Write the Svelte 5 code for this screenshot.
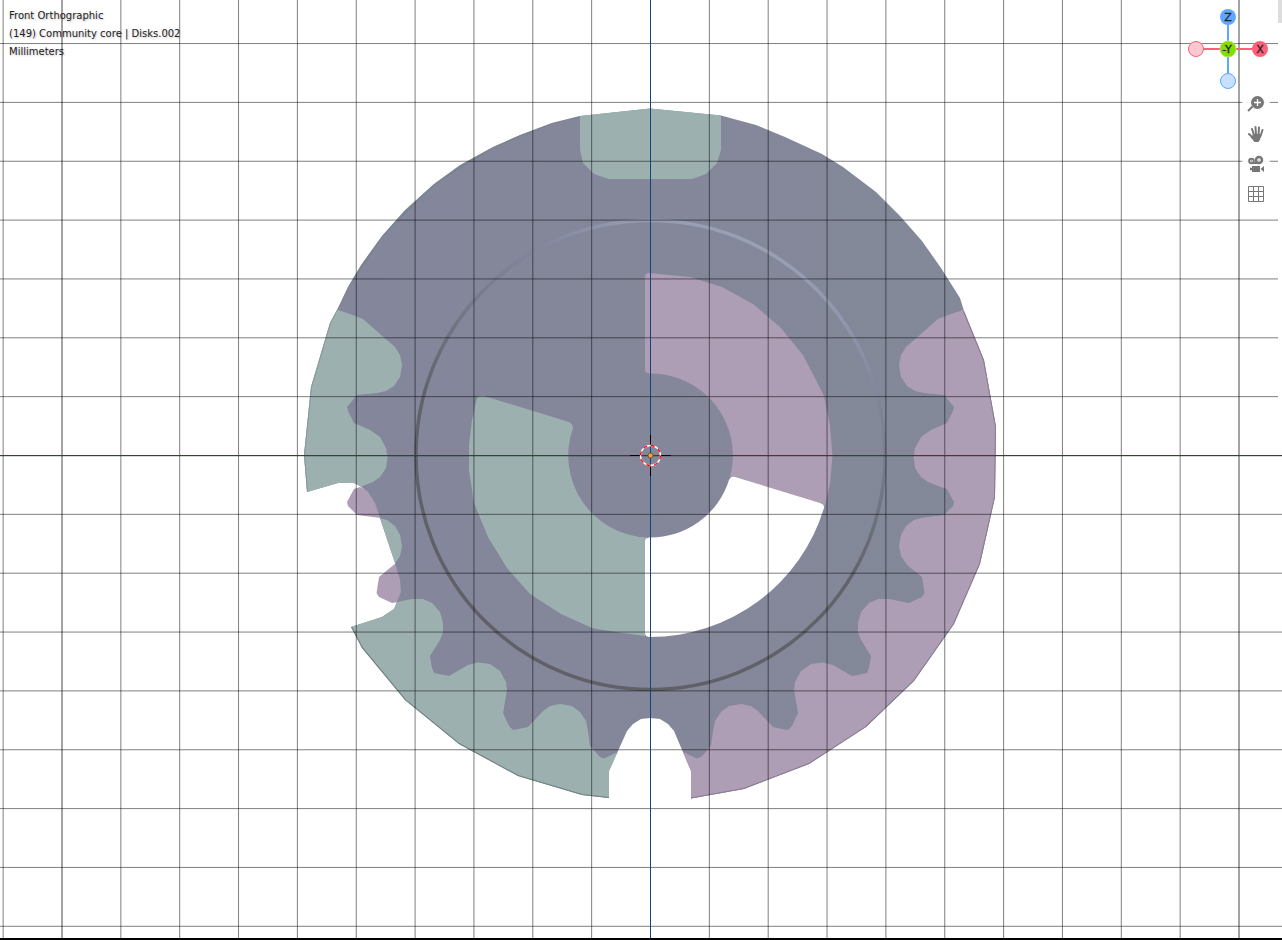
<script>
  const cx = 650.5;
  const cy = 455.5;
  const step = 58.85;
  const columns = Array.from({ length: 22 }, (_, i) => i - 11).map((k) => ({ k, x: cx + k * step }));
  const rows = Array.from({ length: 16 }, (_, i) => i - 7).map((k) => ({ k, y: cy + k * step }));

  // Left flank of the cogged disk, from the upper shoulder to the bottom notch.
  const flank = [
    [338, 310], [350, 314], [363, 319], [380, 334], [395, 347], [400, 355], [402, 365], [400, 377], [394, 386],
    [386, 391], [377, 393], [357, 395], [347, 407], [348, 411], [354, 423], [370, 430], [380, 437], [386, 448],
    [387.5, 457], [386, 468], [380, 477], [373, 482], [360, 487], [354, 489], [347, 502], [348, 506], [357, 515],
    [377, 517.5], [387, 520], [395, 526], [400, 535], [402, 546], [400, 556], [394, 565], [379, 577], [376.5, 593],
    [379, 597], [392, 603], [412, 599], [423, 599], [432, 603], [440, 612], [443, 623], [443, 632], [440, 640],
    [430, 656], [432, 668], [434, 673], [449, 676], [468, 665], [478, 662.5], [490, 664], [500, 671], [506, 682],
    [507, 690], [503, 713], [509, 726], [513, 730], [528, 727], [543, 711], [550, 706], [560, 704], [572, 706],
    [580, 712], [586, 721], [588, 731], [590, 746], [600, 757], [604, 758.5], [618, 752]
  ];
  const str = (pts) => pts.map((p) => p.join(',')).join(' ');
  const mirror = (pts) => pts.map(([x, y]) => [1301 - x, y]);
  const leftRim = [...flank, [640, 820], [280, 820], [280, 290]];
  const leftSide = str(leftRim);
  const rightSide = str(mirror(leftRim));

  const outline =
    '580,116 650,108.5 721,115.5 756,125 785,137 822,154 843,167 876,192 900,216 922,241 941,268 960,298 964,311 984,360 996,427 995,497 980,564 954,624 914,681 866,727 809,764 744,789 691,798.5 691,771 674,731 668,724 660,719 650,718 641,719 633,724 627,731 609,771 609,798 582,795 518,776 459,744 405,700 362,648 351,627 382,617 394,609 401,592 400,580 395,563 380,518 375,503 368,492 360,486 353,482.5 338,483 307,492 304,455 311,387 330,323 338,308 348,287 361,265 382,236 405,210 434,184 460,165 493,147 520,135 552,123';
</script>

<main class="viewport">
  <svg class="scene" viewBox="0 0 1282 940" preserveAspectRatio="xMidYMid slice" aria-label="Disks.002">
    <defs>
      <clipPath id="outline"><polygon points={outline} /></clipPath>
      <linearGradient id="body" x1="0" y1="0" x2="1" y2="0">
        <stop offset="0" stop-color="#84869b" />
        <stop offset="0.5" stop-color="#84879a" />
        <stop offset="1" stop-color="#838999" />
      </linearGradient>
      <linearGradient id="groove" gradientUnits="userSpaceOnUse" x1="570" y1="690" x2="770" y2="220">
        <stop offset="0" stop-color="#606067" />
        <stop offset="0.42" stop-color="#62636b" />
        <stop offset="0.6" stop-color="#747786" />
        <stop offset="0.76" stop-color="#81859a" />
        <stop offset="0.87" stop-color="#9096ac" />
        <stop offset="1" stop-color="#a0a6bc" />
      </linearGradient>
      <filter id="soft"><feGaussianBlur stdDeviation="0.7" /></filter>
    </defs>

    <g fill="#ad9db5">
      <polygon points="366,490 360,487 354,489 347,502 348,506 357,515 381,518 378,500" />
      <polygon points="396,563 379,577 376.5,593 379,597 392,603 399,602 403,590 402,575" />
    </g>
    <polygon points={outline} fill="url(#body)" />
    <g clip-path="url(#outline)">
      <polygon points={leftSide} fill="#9db0b0" />
      <polygon points={rightSide} fill="#ad9db5" />
      <path d="M580 100V150L583 163L594 174L609 179H692L706 174L717 163L721 150V100Z" fill="#9db0b0" />
      <polyline
        points="964,311 984,360 996,427 995,497 980,564 954,624 914,681 866,727 809,764 744,789 691,798.5"
        fill="none" stroke="#75657c" stroke-width="2" filter="url(#soft)" opacity="0.6" />
      <polyline
        points="609,798 582,795 518,776 459,744 405,700 362,648 351,627"
        fill="none" stroke="#5f7070" stroke-width="2" filter="url(#soft)" opacity="0.7" />
      <polyline
        points="307,492 304,455 311,387 330,323 348,287 382,236 434,184 493,147 552,123 580,116"
        fill="none" stroke="#708285" stroke-width="2" filter="url(#soft)" opacity="0.5" />
    </g>
    <circle cx={cx} cy="455" r="234.5" fill="none" stroke="url(#groove)" stroke-width="3.500" filter="url(#soft)" />

    <path
      d="M645 277Q645 273 649 273L690 277L722 287L753 304L780 327L803 355L818 384L824 396L830 425L832.5 456L830 484L825 506L820 504L730 477A82 82 0 0 0 650 373.500Q645 373 645 370Z"
      fill="#ad9db5" />
    <path
      d="M477 398Q479 395 484 396L569 422Q573 424 573 428A82 82 0 0 0 647 537.500L645 540V636L609 631L592 628L561 614L530 594L507 568L488 537L474 503L469 470V445L472 420Z"
      fill="#9db0b0" />
    <path
      d="M645 541Q645 538 649 537.500A82 82 0 0 0 729 480Q731 476 735 477L820 503Q825 505 824 508A182 182 0 0 1 650 637Q645 637 645 633Z"
      fill="#fff" />

    <g stroke="#000">
      {#each columns as c}
        {#if c.k !== 0}
          <line x1={c.x} x2={c.x} y1="0" y2="940" stroke-opacity={c.k % 10 === 0 ? 0.72 : 0.5} />
        {/if}
      {/each}
      {#each rows as r}
        {#if r.k !== 0}
          <line x1="0" x2="1282" y1={r.y} y2={r.y} stroke-opacity="0.5" />
        {/if}
      {/each}
    </g>
    <line x1="0" x2="1282" y1="456.500" y2="456.500" stroke="#000" stroke-opacity="0.15" />
    <line x1="0" x2="1282" y1={cy} y2={cy} stroke="#7d1f2d" />
    <line x1={cx} x2={cx} y1="0" y2="940" stroke="#0f447f" />
    <path d="M630 455.500H641M660 455.500H671M650.500 435V446M650.500 465V476" stroke="#000" />
    <circle cx={cx} cy={cy} r="10" fill="none" stroke="#fff" stroke-width="1.300" />
    <circle cx={cx} cy={cy} r="10" fill="none" stroke="#f00" stroke-width="1.300" stroke-dasharray="3.927" />
    <circle cx={cx} cy={cy} r="2.500" fill="#ffa02b" stroke="#5b4638" stroke-width="0.800" />
  </svg>

  <header class="info">
    <div>Front Orthographic</div>
    <div>(149) Community core | Disks.002</div>
    <div>Millimeters</div>
  </header>

  <div class="edge"><div class="handle"></div></div>

  <aside class="controls">
    <svg class="gizmo" width="80" height="82" viewBox="0 0 80 82" role="img" aria-label="View axes">
      <path d="M40 9V73" stroke="#5ea8ff" stroke-width="2" />
      <path d="M8 41H72" stroke="#ff6079" stroke-width="2" />
      <circle cx="8" cy="41" r="7.500" fill="#ffc8d0" stroke="#ff6079" />
      <circle cx="40" cy="73" r="7.500" fill="#c8e0ff" stroke="#5ea8ff" />
      <circle cx="40" cy="9" r="8" fill="#5ea8ff" />
      <circle cx="72" cy="41" r="8" fill="#ff6079" />
      <circle cx="40" cy="41" r="8" fill="#86dc00" stroke="#b4e666" stroke-width="1" />
      <g class="axis" text-anchor="middle">
        <text x="40" y="13">Z</text>
        <text x="72" y="45">X</text>
        <text x="39" y="45">-Y</text>
      </g>
    </svg>
    <nav class="tools">
      <button aria-label="Zoom">
        <svg width="18" height="18" viewBox="0 0 18 18">
          <path d="M1 16L5.500 11.500" stroke="#777" stroke-width="2" />
          <circle cx="10.500" cy="7.500" r="6.500" fill="#777" />
          <path d="M10.500 4V11M7 7.500H14" stroke="#fff" stroke-width="1.300" />
        </svg>
      </button>
      <button aria-label="Move">
        <svg width="18" height="18" viewBox="0 0 18 18">
          <g stroke="#777" stroke-linecap="round" stroke-width="2" fill="none">
            <path d="M5 4L7 10M8.500 2L9 10M12 2.500L11.500 10M15.500 5L13.500 11M2 9L6 13" />
          </g>
          <path d="M5.500 9H14.500L14 12Q13 15 11.500 17H7.500L3.500 12L5.500 11.500Z" fill="#777" />
        </svg>
      </button>
      <button aria-label="Camera view">
        <svg width="18" height="18" viewBox="0 0 18 18">
          <circle cx="4.500" cy="6" r="2.300" fill="none" stroke="#777" stroke-width="2" />
          <circle cx="12" cy="5" r="3" fill="none" stroke="#777" stroke-width="2.500" />
          <path d="M4.500 9H12V7H5ZM5 11H13V17H5V15L3 15.500V12.500L5 13ZM13.500 14L17 11V17Z" fill="#777" />
          <circle cx="4.500" cy="6" r=".7" fill="#777" /><circle cx="12" cy="5" r=".6" fill="#777" />
        </svg>
      </button>
      <button aria-label="Perspective or orthographic">
        <svg width="18" height="18" viewBox="0 0 18 18">
          <path d="M1.500 1.500H16.500V16.500H1.500ZM6.500 1.500V16.500M11.500 1.500V16.500M1.500 6.500H16.500M1.500 11.500H16.500" fill="none" stroke="#777" />
        </svg>
      </button>
    </nav>
  </aside>
</main>

<style>
  .viewport {
    position: relative;
    height: 100vh;
    box-sizing: border-box;
    overflow: hidden;
    background: #fff;
    border-bottom: 2px solid #000;
    font-family: "DejaVu Sans", sans-serif;
  }
  .scene {
    display: block;
    width: 100%;
    height: 100vh;
  }
  .info {
    position: absolute;
    top: 7px;
    left: 9px;
    font-size: 10px;
    line-height: 18px;
    color: #222;
    text-shadow: 1px 1px 2px rgba(0, 0, 0, 0.25);
  }
  .controls {
    position: absolute;
    top: 8px;
    right: 14px;
    display: flex;
    flex-direction: column;
    align-items: flex-end;
  }
  .gizmo {
    display: block;
  }
  .axis {
    font-size: 11px;
    fill: #222;
    stroke: #222;
    stroke-width: 0.3px;
  }
  .tools {
    display: flex;
    flex-direction: column;
    gap: 2px;
    margin-right: -2px;
  }
  button {
    display: grid;
    place-items: center;
    width: 28px;
    height: 28px;
    padding: 0;
    border: 0;
    border-radius: 14px;
    background: rgba(255, 255, 255, 0.9);
  }
  .edge {
    position: absolute;
    top: 0;
    right: 0;
    width: 4px;
    height: 45%;
    background: #fff;
  }
  .handle {
    height: 23px;
    background: #ddd;
  }
</style>
